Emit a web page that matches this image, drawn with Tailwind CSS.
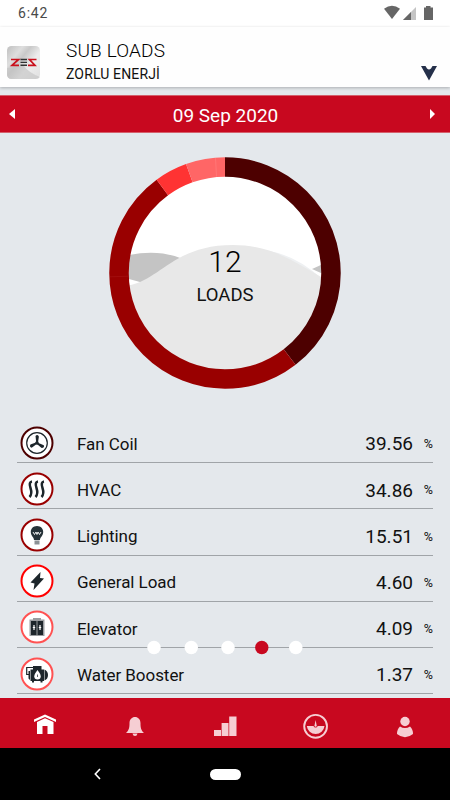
<!DOCTYPE html>
<html lang="en">
<head>
    <meta charset="UTF-8">
    <meta name="viewport" content="width=device-width, initial-scale=1.0">
    <title>Sub Loads</title>
    <script src="https://cdn.jsdelivr.net/npm/@tailwindcss/browser@4"></script>
</head>
<body class="bg-[#e4e8ec] font-['Roboto',sans-serif] text-[#111]">
    <div class="relative flex flex-col w-[450px] h-[800px] overflow-hidden">
        <!-- status bar -->
        <div class="flex h-[27px] bg-white justify-between pl-[18px] pr-[16px] shrink-0">
            <span class="text-[14px] leading-[27px] tracking-[0.8px] text-[#4a4a4a]">6:42</span>
            <svg class="w-[52px] h-[27px]" viewBox="382 0 52 27">
                <path d="M384 8.7Q392 3 400 8.7L392 19Z" fill="#666"/>
                <path d="M416 7V20H403Z" fill="#c4c4c4"/>
                <path d="M411 12V20H403Z" fill="#666"/>
                <path d="M424 7.5H426V6H430.5V7.5H433V20H424Z" fill="#666"/>
            </svg>
        </div>

        <header class="flex h-[60px] bg-[#fefefe] shrink-0 pl-[7px] pr-[13px] shadow-[0_1px_3px_rgba(0,0,0,0.25)]">
            <svg class="w-[33px] h-[33px] mt-[19px]" viewBox="0 0 33 33">
                <defs>
                    <linearGradient id="metal" x1="0" y1="0.1" x2="1" y2="0.9">
                        <stop offset="0" stop-color="#c4c4c4"/>
                        <stop offset="0.25" stop-color="#dedede"/>
                        <stop offset="0.4" stop-color="#c9c9c9"/>
                        <stop offset="0.65" stop-color="#ededed"/>
                        <stop offset="1" stop-color="#e2e2e2"/>
                    </linearGradient>
                </defs>
                <rect width="33" height="33" rx="4.5" fill="url(#metal)"/>
                <path d="M16 19Q22 27 33 31Q32 33 28.500 33H4.500Q0 33 0 28V22Z" fill="#c2c2c2" opacity="0.6"/>
                <path d="M4 13.500H11.500L5 19.300H12M29.500 13.500H22.500L28 19.300H21" fill="none" stroke="#c9101c" stroke-width="1.700"/>
                <path d="M13.500 13.500H20M13.500 16.400H20M13.500 19.300H20" stroke="#333" stroke-width="1.400"/>
            </svg>
            <div class="ml-[26px] grow">
                <h1 class="text-[19px] leading-[22px] mt-[13px] font-light tracking-[0.15px] text-black">SUB LOADS</h1>
                <p class="text-[14px] leading-[18px] mt-[3px] tracking-[0.15px]">ZORLU ENERJİ</p>
            </div>
            <svg class="w-[16px] h-[15px] mt-[39px]" viewBox="0 0 16 15">
                <path d="M0 0H4.500L6 2.500Q8 4.500 10 2.500L11.500 0H16L8 14.500Z" fill="#25304a"/>
            </svg>
        </header>

        <div class="flex items-center justify-between h-[38px] mt-[8px] pl-[9px] pr-[15px] bg-[#c8081f] border-y border-[#d4606c] shrink-0">
            <svg class="w-[6px] h-[10px]" viewBox="0 0 6 10"><path d="M6 0V10L0 5Z" fill="#fff"/></svg>
            <span class="text-[19px] text-white ml-[6px] mt-[5px]">09 Sep 2020</span>
            <svg class="w-[5px] h-[10px]" viewBox="0 0 5 10"><path d="M0 0V10L5 5Z" fill="#fff"/></svg>
        </div>

        <!-- load distribution -->
        <div class="grid place-items-center h-[279px] shrink-0">
            <svg class="w-[232px] h-[232px]" viewBox="109 157 232 232">
                <defs>
                    <clipPath id="inner"><circle cx="225" cy="273" r="97"/></clipPath>
                </defs>
                <g clip-path="url(#inner)">
                    <rect x="125" y="170" width="200" height="210" fill="#fff"/>
                    <path d="M270 251Q300 257 325 282L300 280Z" fill="#eef0f2"/>
                    <path d="M125 256Q157 248 183 259L160 275Q148 283 140 282L125 278Z" fill="#c4c4c4"/>
                    <path d="M312 269L325 263V275Z" fill="#c4c4c4"/>
                    <path d="M125 286C160 282 172 245 233 245C275 245 300 266 325 279V375H125Z" fill="#e8e8e8"/>
                </g>
                <g fill="none" stroke-width="19.500" transform="rotate(-90 225 273)">
                    <circle cx="225" cy="273" r="106" pathLength="100" stroke="#4d0000" stroke-dasharray="39.56 100"/>
                    <circle cx="225" cy="273" r="106" pathLength="100" stroke="#990000" stroke-dasharray="50.37 100" stroke-dashoffset="-39.56"/>
                    <circle cx="225" cy="273" r="106" pathLength="100" stroke="#ff3333" stroke-dasharray="4.600 100" stroke-dashoffset="-89.93"/>
                    <circle cx="225" cy="273" r="106" pathLength="100" stroke="#ff6666" stroke-dasharray="5.470 100" stroke-dashoffset="-94.53"/>
                </g>
                <path d="M110 276.800L129 276.200" stroke="#a51212" stroke-width="0.700"/>
                <path d="M215.500 158L216.500 176.500" stroke="#ff7d7d" stroke-width="0.700"/>
                <text x="225" y="272" font-size="30" font-weight="300" text-anchor="middle" fill="#000">12</text>
                <text x="225" y="301" font-size="18.500" text-anchor="middle" fill="#111">LOADS</text>
            </svg>
        </div>

        <ul class="flex flex-col mt-[5px] mx-[17px] grow text-[17px]">
            <li class="flex items-center h-[46.2px] pl-[3px] border-b border-[#a0a4a8] shrink-0">
                <svg class="w-[34px] h-[34px] mt-[6px]" viewBox="0 0 34 34">
                    <circle cx="17" cy="17" r="15.500" fill="#fff" stroke="#4d0000" stroke-width="2"/>
                    <circle cx="17" cy="17" r="10.300" fill="none" stroke="#1d262b" stroke-width="1.200"/>
                    <g fill="#1d262b">
                        <path id="blade" d="M16.300 17L15.500 10Q17.300 8 18.900 10.500L17.900 17Z"/>
                        <use href="#blade" transform="rotate(120 17 17)"/>
                        <use href="#blade" transform="rotate(240 17 17)"/>
                        <circle cx="17" cy="17" r="1.800"/>
                    </g>
                </svg>
                <span class="ml-[23px] mt-[10px] tracking-[-0.05px] grow">Fan Coil</span>
                <span class="text-[19px] mt-[10px]">39.56</span>
                <span class="text-[12.500px] w-[20px] mt-[10px] text-right">%</span>
            </li>
            <li class="flex items-center h-[46.2px] pl-[3px] border-b border-[#a0a4a8] shrink-0">
                <svg class="w-[34px] h-[34px] mt-[6px]" viewBox="0 0 34 34">
                    <circle cx="17" cy="17" r="15.500" fill="#fff" stroke="#990000" stroke-width="2"/>
                    <path d="M12 9.500Q8.500 10 10.500 16T9.500 25M18 9.500Q14.500 10 16.500 16T15.500 25M24 9.500Q20.500 10 22.500 16T21.500 25" fill="none" stroke="#1d262b" stroke-width="2.500"/>
                </svg>
                <span class="ml-[23px] mt-[10px] tracking-[-0.05px] grow">HVAC</span>
                <span class="text-[19px] mt-[10px]">34.86</span>
                <span class="text-[12.500px] w-[20px] mt-[10px] text-right">%</span>
            </li>
            <li class="flex items-center h-[46.2px] pl-[3px] border-b border-[#a0a4a8] shrink-0">
                <svg class="w-[34px] h-[34px] mt-[6px]" viewBox="0 0 34 34">
                    <circle cx="17" cy="17" r="15.500" fill="#fff" stroke="#990000" stroke-width="2"/>
                    <path d="M17 8C13 8 10.800 10.800 10.800 14C10.800 18 14 19 14 22H20C20 19 23.200 18 23.200 14C23.200 10.800 21 8 17 8Z" fill="#263238"/>
                    <path d="M13 14L14.500 16.500L16 14L17 16.500L18 14L19.500 16.500L21 14" fill="none" stroke="#fff" stroke-width="0.900"/>
                    <path d="M14.500 22.500H19.500V26.500H14.500Z" fill="#8b9195"/>
                </svg>
                <span class="ml-[23px] mt-[10px] tracking-[-0.05px] grow">Lighting</span>
                <span class="text-[19px] mt-[10px]">15.51</span>
                <span class="text-[12.500px] w-[20px] mt-[10px] text-right">%</span>
            </li>
            <li class="flex items-center h-[46.2px] pl-[3px] border-b border-[#a0a4a8] shrink-0">
                <svg class="w-[34px] h-[34px] mt-[6px]" viewBox="0 0 34 34">
                    <circle cx="17" cy="17" r="15.500" fill="#fff" stroke="#ff0000" stroke-width="2"/>
                    <path d="M20.500 8L20 14L24 14.500L13.500 26L14.500 19.500L10.500 18.500Z" fill="#1d262b"/>
                </svg>
                <span class="ml-[23px] mt-[10px] tracking-[-0.05px] grow">General Load</span>
                <span class="text-[19px] mt-[10px]">4.60</span>
                <span class="text-[12.500px] w-[20px] mt-[10px] text-right">%</span>
            </li>
            <li class="flex items-center h-[46.2px] pl-[3px] border-b border-[#a0a4a8] shrink-0">
                <svg class="w-[34px] h-[34px] mt-[6px]" viewBox="0 0 34 34">
                    <circle cx="17" cy="17" r="15.500" fill="#fff" stroke="#ff5252" stroke-width="2"/>
                    <path d="M13 8H21V9.500H24.500V26H9.500V9.500H13Z" fill="#9a9da0"/>
                    <path d="M11 11H16.500V25H11ZM17.500 11H23V25H17.500Z" fill="#1d262b"/>
                    <path d="M14 15V20M12.800 17.500H15.200M20 15V20M18.800 17.500H21.200" stroke="#fff" stroke-width="1.200"/>
                </svg>
                <span class="ml-[23px] mt-[10px] tracking-[-0.05px] grow">Elevator</span>
                <span class="text-[19px] mt-[10px]">4.09</span>
                <span class="text-[12.500px] w-[20px] mt-[10px] text-right">%</span>
            </li>
            <li class="flex items-center h-[46.2px] pl-[3px] border-b border-[#a0a4a8] shrink-0">
                <svg class="w-[34px] h-[34px] mt-[6px]" viewBox="0 0 34 34">
                    <circle cx="17" cy="17" r="15.500" fill="#fff" stroke="#ff5252" stroke-width="2"/>
                    <path d="M9 17.500H6.700V10.500H13" fill="none" stroke="#1d262b" stroke-width="1.200"/>
                    <path d="M13 9H21.500V12.500H24V24H22.500V25.500H20.500V24H14V25.500H12V24H10.500V12.500H13Z" fill="#1d262b"/>
                    <path d="M8.500 14H10V23L8.500 21.500ZM24.500 12.500Q28 14 28 18T24.500 23.500Z" fill="#1d262b"/>
                    <path d="M17.500 13Q14.300 17 14.300 19.300A3.200 3.200 0 0 0 20.700 19.300Q20.700 17 17.500 13Z" fill="#fff"/>
                    <path d="M17.500 17.500V20" stroke="#1d262b" stroke-width="0.700"/>
                </svg>
                <span class="ml-[23px] mt-[10px] tracking-[-0.05px] grow">Water Booster</span>
                <span class="text-[19px] mt-[10px]">1.37</span>
                <span class="text-[12.500px] w-[20px] mt-[10px] text-right">%</span>
            </li>
        </ul>

        <!-- page dots float over the list -->
        <svg class="absolute left-[140px] top-[640px] w-[170px] h-[15px]" viewBox="140 640 170 15" fill="#fff">
            <circle cx="154" cy="647.500" r="6.700"/>
            <circle cx="191.300" cy="647.500" r="6.700"/>
            <circle cx="228" cy="647.500" r="6.700"/>
            <circle cx="261.800" cy="647.500" r="6.700" fill="#c8081f"/>
            <circle cx="295.800" cy="647.500" r="6.700"/>
        </svg>

        <nav class="grid grid-cols-5 h-[50px] bg-[#c8081f] shrink-0">
            <svg class="w-[90px] h-[50px]" viewBox="0 0 90 50" fill="#fff">
                <path d="M34 21.500L45 16.500L56 21.500V24L45 19L34 24Z"/>
                <path d="M37 24L45 20.300L53.500 24V36H47.500V28H42.500V36H37Z"/>
            </svg>
            <svg class="w-[90px] h-[50px]" viewBox="90 0 90 50" fill="#f6ced3">
                <path d="M135 19C138 19 140.500 21.500 140.500 25C140.500 30 141 32 144 35H126C129 32 129.500 30 129.500 25C129.500 21.500 132 19 135 19ZM132.500 35.500H137.500Q137 38 135 38T132.500 35.500Z"/>
            </svg>
            <svg class="w-[90px] h-[50px]" viewBox="180 0 90 50" fill="#f6ced3">
                <path d="M214 32H221V38H214ZM221.600 25H228.500V38H221.600ZM229.200 18.500H236.500V38H229.200Z"/>
            </svg>
            <svg class="w-[90px] h-[50px]" viewBox="270 0 90 50" fill="#f6ced3">
                <circle cx="315.600" cy="28.300" r="11.400" fill="none" stroke="#f6ced3" stroke-width="1.900"/>
                <path d="M306.800 28H313.500A2.200 2.200 0 0 0 317.700 28H324.500A8.900 8.900 0 0 1 306.800 28Z"/>
                <path d="M315.600 22L316.800 28A1.300 1.300 0 0 1 314.400 28Z"/>
            </svg>
            <svg class="w-[90px] h-[50px]" viewBox="360 0 90 50" fill="#f6ced3">
                <circle cx="405" cy="23.500" r="4.700"/>
                <path d="M400 28.500Q405 31.500 410 28.500Q413 31 413 36Q405 42.500 397 36Q397 31 400 28.500Z"/>
            </svg>
        </nav>

        <div class="flex items-center h-[52px] bg-black shrink-0 pl-[94px]">
            <svg class="w-[7px] h-[12px]" viewBox="0 0 7 12"><path d="M6 1L1.300 6L6 11" fill="none" stroke="#fff" stroke-width="1.600"/></svg>
            <div class="w-[31px] h-[11px] rounded-full bg-white ml-[109px]"></div>
        </div>
    </div>
</body>
</html>
